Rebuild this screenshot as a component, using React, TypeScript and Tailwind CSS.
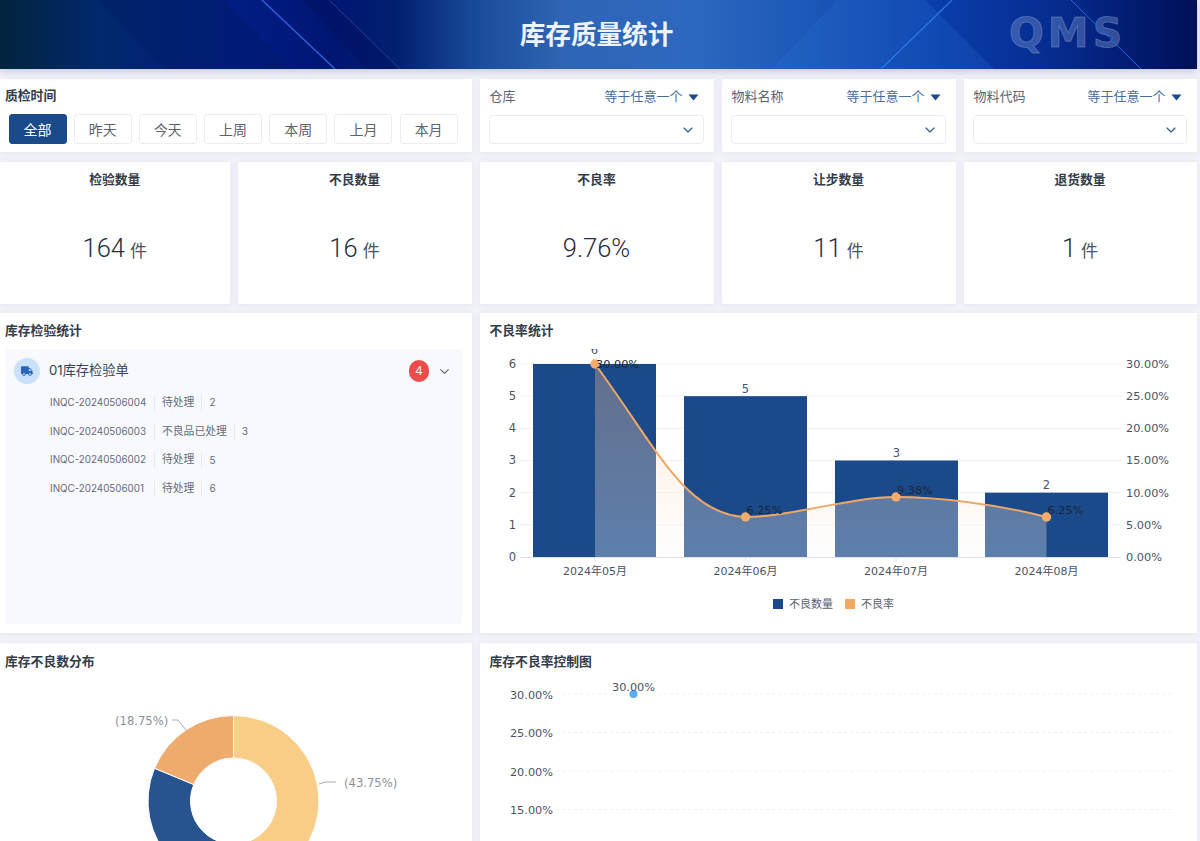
import { ChevronDown } from "lucide-react"
import { FaTruck } from "react-icons/fa"

const dateTabs = ["全部", "昨天", "今天", "上周", "本周", "上月", "本月"]
const filters = ["仓库", "物料名称", "物料代码"]
const stats = [
  { title: "检验数量", value: "164", unit: "件" },
  { title: "不良数量", value: "16", unit: "件" },
  { title: "不良率", value: "9.76%", unit: "" },
  { title: "让步数量", value: "11", unit: "件" },
  { title: "退货数量", value: "1", unit: "件" },
]
const orders = [
  { code: "INQC-20240506004", status: "待处理", count: 2 },
  { code: "INQC-20240506003", status: "不良品已处理", count: 3 },
  { code: "INQC-20240506002", status: "待处理", count: 5 },
  { code: "INQC-20240506001", status: "待处理", count: 6 },
]

const chartFont = "'DejaVu Sans', 'Noto Sans CJK SC', sans-serif"

function Card({ className = "", children }: { className?: string; children: React.ReactNode }) {
  return <div className={`bg-white shadow-[0_1px_6px_rgba(90,90,140,0.08)] ${className}`}>{children}</div>
}

function CardTitle({ children }: { children: React.ReactNode }) {
  return <h2 className="text-[12.8px] leading-[18px] font-bold text-[#343c49]">{children}</h2>
}

function Header() {
  return (
    <header className="relative z-10 flex h-[69px] w-[1197px] items-center justify-center overflow-hidden bg-[linear-gradient(90deg,#02243e_0%,#01296a_8%,#011c84_20%,#001672_28%,#021f70_33%,#1a4c9c_40%,#2f65b4_47%,#2d68c0_58%,#1c59b8_67%,#0a3ca8_79%,#062c90_88%,#000f58_100%)] pr-[4px] pb-[3px] shadow-[0_2px_8px_rgba(60,60,130,0.25)]">
      <svg className="absolute inset-0 h-full w-full" viewBox="0 0 1197 69" preserveAspectRatio="none">
        <polygon points="98,0 226,0 288,69 165,69" fill="#001a5c" opacity="0.3" />
        <polygon points="302,0 329,0 400,69 367,69" fill="#000f5c" opacity="0.35" />
        <polygon points="837,0 925,0 994,69 772,69" fill="#2a78d8" opacity="0.22" />
        <line x1="262" y1="0" x2="335" y2="69" stroke="#2f62e0" strokeWidth="1.4" />
        <line x1="329" y1="0" x2="400" y2="69" stroke="#3f63a8" strokeWidth="0.8" opacity="0.7" />
        <line x1="881" y1="69" x2="952" y2="0" stroke="#2a78ea" strokeWidth="1.2" />
      </svg>
      <h1 className="relative text-[25.6px] leading-none font-bold text-[#eef3fa] font-['Noto_Sans_CJK_SC',sans-serif]">
        库存质量统计
      </h1>
      <span className="absolute top-[13px] left-[1009px] text-[41px] leading-[41px] font-bold tracking-[4px] text-[#6f8cc8]/45 [-webkit-text-stroke:1px_rgba(130,155,210,0.45)] font-['DejaVu_Sans',sans-serif]">
        QMS
      </span>
      <svg className="absolute inset-0 h-full w-full" viewBox="0 0 1197 69" preserveAspectRatio="none">
        <line x1="1071" y1="0" x2="1141" y2="69" stroke="#1f6be0" strokeWidth="1" />
      </svg>
    </header>
  )
}

function TimeFilter() {
  return (
    <Card className="col-span-2 h-[73px] px-[5px] pt-[8px]">
      <CardTitle>质检时间</CardTitle>
      <div className="mt-[9px] ml-[3.5px] flex gap-[7.2px]">
        {dateTabs.map((tab, i) => (
          <button
            key={tab}
            className={`h-[30px] w-[58px] rounded-[3px] border text-[14px] ${
              i === 0 ? "border-[#1a4a8a] bg-[#1a4a8a] text-white" : "border-[#ebedf2] bg-white text-[#5b6370]"
            }`}
          >
            {tab}
          </button>
        ))}
      </div>
    </Card>
  )
}

function SelectFilter({ label }: { label: string }) {
  return (
    <Card className="h-[73px] pt-[9px] pr-[10px] pl-[9px]">
      <div className="flex h-[18px] items-center justify-between pr-[5px] pl-px">
        <span className="text-[13px] text-[#5b6370]">{label}</span>
        <span className="flex items-center gap-[4px] text-[13px] text-[#456d9f]">
          等于任意一个
          <svg width="11" height="7" viewBox="0 0 11 7" className="ml-px">
            <path d="M0.5 0.5h10L5.5 6.5z" fill="#1a4a8a" />
          </svg>
        </span>
      </div>
      <div className="mt-[9px] flex h-[29px] items-center justify-end rounded-[4px] border border-[#ebedf2] pr-[7px]">
        <ChevronDown size={16} strokeWidth={1.6} className="text-[#2a5590]" />
      </div>
    </Card>
  )
}

function StatCard({ title, value, unit }: { title: string; value: string; unit: string }) {
  return (
    <Card className="flex h-[142px] flex-col items-center pt-[9px]">
      <CardTitle>{title}</CardTitle>
      <div className="mt-[40px] flex items-baseline gap-[5px] text-[#242e40]">
        <span className="text-[25.5px] leading-[38px] font-light font-['Roboto','Noto_Sans_CJK_SC',sans-serif]">
          {value}
        </span>
        {unit && <span className="text-[17px] text-[#4a5360]">{unit}</span>}
      </div>
    </Card>
  )
}

function InspectionPanel() {
  return (
    <Card className="col-span-2 h-[320px] pt-[9px] pl-[5px]">
      <CardTitle>库存检验统计</CardTitle>
      <div className="mt-[9px] h-[275px] w-[457px] rounded-[4px] bg-[#f8f9fe] pt-[9px]">
        <div className="flex h-[26px] items-center pr-[10px] pl-[9px]">
          <span className="flex h-[26px] w-[26px] items-center justify-center rounded-full bg-[#c9e1fb]">
            <FaTruck size={12} className="text-[#2563bd]" />
          </span>
          <span className="ml-[9px] flex-1 text-[13.2px] text-[#3a4250]">01库存检验单</span>
          <span className="flex h-[22px] w-[20px] items-center justify-center rounded-full bg-[#ee4b4b] text-[12px] text-[#ffe9e9]">
            4
          </span>
          <ChevronDown size={15} strokeWidth={1.8} className="ml-[8px] text-[#5b6370]" />
        </div>
        <ul className="mt-[4.5px] ml-[45px] flex flex-col">
          {orders.map((order) => (
            <li key={order.code} className="flex h-[28.7px] items-center text-[10.8px] whitespace-nowrap text-[#656c78]">
              <span className="w-[105px] border-r border-[#e8eaf0] text-[9.8px] leading-[16px]">{order.code}</span>
              <span className="border-r border-[#e8eaf0] px-[7px] leading-[16px]">{order.status}</span>
              <span className="pl-[7px] text-[10px]">{order.count}</span>
            </li>
          ))}
        </ul>
      </div>
    </Card>
  )
}

function RateChart() {
  const yFor = (v: number) => 208 - v * 32.17
  const bars = [
    { x: 53, v: 6 },
    { x: 204, v: 5 },
    { x: 355, v: 3 },
    { x: 505, v: 2 },
  ]
  const months = ["2024年05月", "2024年06月", "2024年07月", "2024年08月"]
  const centers = [115, 265.5, 416, 566.5]
  const line = "M115 15 C175 96,205 166,265.5 168 C310 168,370 148,416 148 C460 148,520 156,566.5 168"
  const area = `${line} L566.5 208 L115 208 Z`
  const points = [
    { x: 115, y: 15, label: "30.00%", dy: 4 },
    { x: 265.5, y: 168, label: "6.25%", dy: -3 },
    { x: 416, y: 148, label: "9.38%", dy: -3 },
    { x: 566.5, y: 168, label: "6.25%", dy: -3 },
  ]
  return (
    <svg width="717" height="273" viewBox="0 0 717 273" className="mt-[9px] block" style={{ fontFamily: chartFont }}>
      <defs>
        <linearGradient id="rateArea" x1="0" y1="0" x2="0" y2="1">
          <stop offset="0%" stopColor="#ffbe91" stopOpacity="0.32" />
          <stop offset="100%" stopColor="#fafafa" stopOpacity="0.3" />
        </linearGradient>
      </defs>
      {[0, 1, 2, 3, 4, 5, 6].map((v) => (
        <g key={v}>
          {v > 0 && <line x1="40" x2="641" y1={yFor(v)} y2={yFor(v)} stroke="#f0f1f4" />}
          <text x="36" y={yFor(v) + 4} textAnchor="end" fontSize="11.5" fill="#4b5362">
            {v}
          </text>
          <text x="646" y={yFor(v) + 4} fontSize="11.3" fill="#4b5362">
            {(v * 5).toFixed(2)}%
          </text>
        </g>
      ))}
      {bars.map((b) => (
        <g key={b.x}>
          <rect x={b.x} y={yFor(b.v)} width="123" height={b.v * 32.17} fill="#1a4a8a" />
          <text
            x={b.x + 61.5}
            y={b.v === 6 ? 4.5 : yFor(b.v) - 3.5}
            textAnchor="middle"
            fontSize="11.5"
            fill="#4b5362"
          >
            {b.v}
          </text>
        </g>
      ))}
      <path d={area} fill="url(#rateArea)" />
      <line x1="40" x2="641" y1="208.5" y2="208.5" stroke="#dfe1ea" strokeWidth="1" />
      {centers.map((c, i) => (
        <g key={c}>
          <line x1={c} x2={c} y1="208" y2="213" stroke="#dfe1ea" />
          <text x={c} y="226" textAnchor="middle" fontSize="11" fill="#4b5362">
            {months[i]}
          </text>
        </g>
      ))}
      <path d={line} fill="none" stroke="#efa768" strokeWidth="2" />
      {points.map((p) => (
        <g key={p.x}>
          <circle cx={p.x} cy={p.y} r="4.7" fill="#f2ac6c" />
          <text x={p.x + 1} y={p.y + p.dy} fontSize="11.3" fill="#1d2738">
            {p.label}
          </text>
        </g>
      ))}
      <rect x="293" y="250" width="10" height="10" fill="#1a4a8a" />
      <text x="309" y="259" fontSize="11" fill="#5b6370">
        不良数量
      </text>
      <rect x="365" y="250" width="10" height="10" fill="#efa768" />
      <text x="381" y="259" fontSize="11" fill="#5b6370">
        不良率
      </text>
    </svg>
  )
}

function DefectDonut() {
  const cx = 233.5
  const cy = 158
  const r = 85.5
  const inner = 43
  const slice = (from: number, to: number) => {
    const pt = (rad: number, a: number) => {
      const t = (a * Math.PI) / 180
      return `${cx + rad * Math.sin(t)} ${cy - rad * Math.cos(t)}`
    }
    const large = to - from > 180 ? 1 : 0
    return `M${pt(r, from)} A${r} ${r} 0 ${large} 1 ${pt(r, to)} L${pt(inner, to)} A${inner} ${inner} 0 ${large} 0 ${pt(inner, from)} Z`
  }
  return (
    <svg width="471" height="170" viewBox="0 28 471 170" className="block" style={{ fontFamily: chartFont }}>
      <path d={slice(0, 157.5)} fill="#f8cd87" stroke="#fff" />
      <path d={slice(157.5, 292.5)} fill="#27538f" stroke="#fff" />
      <path d={slice(292.5, 360)} fill="#efaa6d" stroke="#fff" />
      <path d="M172 77 H178 L186 87" fill="none" stroke="#a9adb6" />
      <path d="M319 141 L325 139 H336" fill="none" stroke="#a9adb6" />
      <text x="115" y="81.5" fontSize="11.6" fill="#8b8f99">
        (18.75%)
      </text>
      <text x="344" y="143.5" fontSize="11.6" fill="#8b8f99">
        (43.75%)
      </text>
    </svg>
  )
}

function ControlChart() {
  const rows = [
    { y: 23, label: "30.00%" },
    { y: 61.5, label: "25.00%" },
    { y: 100, label: "20.00%" },
    { y: 138.5, label: "15.00%" },
  ]
  return (
    <svg width="717" height="170" viewBox="0 0 717 170" className="block" style={{ fontFamily: chartFont }}>
      {rows.map((row) => (
        <g key={row.label}>
          <line x1="76" x2="693" y1={row.y} y2={row.y} stroke="#eff0f4" strokeDasharray="3 3" />
          <text x="73" y={row.y + 4.5} textAnchor="end" fontSize="11.3" fill="#4b5362">
            {row.label}
          </text>
        </g>
      ))}
      <circle cx="153.5" cy="23" r="4" fill="#5aaef0" />
      <text x="153.5" y="20" textAnchor="middle" fontSize="11.3" fill="#4b5362">
        30.00%
      </text>
    </svg>
  )
}

export default function App() {
  return (
    <div className="h-[841px] w-[1200px] overflow-hidden bg-[#f1f2f8] font-['Inter','Noto_Sans_CJK_SC',sans-serif]">
      <Header />
      <main className="grid w-[1197px] grid-cols-[229.5px_234px_234px_234px_233px] gap-x-[8px] gap-y-[9.5px] pt-[10px]">
        <TimeFilter />
        {filters.map((label) => (
          <SelectFilter key={label} label={label} />
        ))}
        {stats.map((stat) => (
          <StatCard key={stat.title} {...stat} />
        ))}
        <InspectionPanel />
        <Card className="col-span-3 h-[320px] pt-[9px]">
          <div className="pl-[10px]">
            <CardTitle>不良率统计</CardTitle>
          </div>
          <RateChart />
        </Card>
        <Card className="col-span-2 h-[198px] overflow-hidden pt-[10px]">
          <div className="pl-[5px]">
            <CardTitle>库存不良数分布</CardTitle>
          </div>
          <DefectDonut />
        </Card>
        <Card className="col-span-3 h-[198px] overflow-hidden pt-[10px]">
          <div className="pl-[10px]">
            <CardTitle>库存不良率控制图</CardTitle>
          </div>
          <ControlChart />
        </Card>
      </main>
    </div>
  )
}
